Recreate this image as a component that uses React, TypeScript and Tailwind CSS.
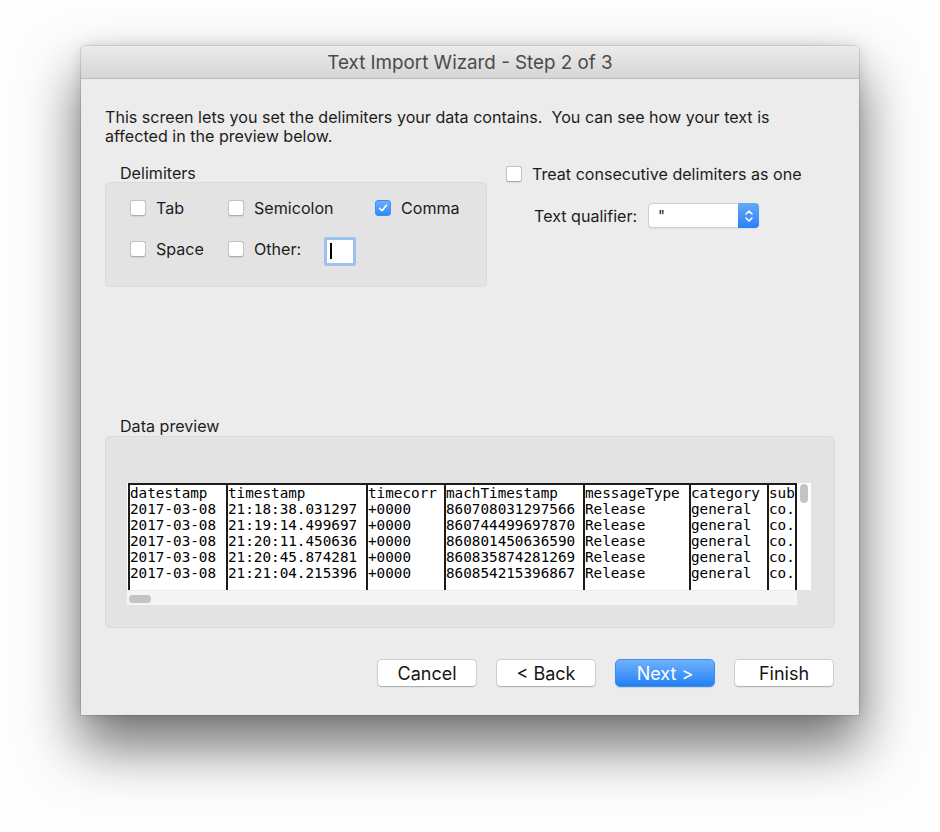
import React from "react";

function Checkbox({ checked }: { checked?: boolean }) {
  if (checked) {
    return (
      <div className="w-[16px] h-[16px] shrink-0 rounded-[3px] bg-gradient-to-b from-[#6aaefc] to-[#2f8bf8] border border-[#3a8ef2] flex items-center justify-center">
        <svg width="12" height="12" viewBox="0 0 12 12" fill="none">
          <path d="M2.6 6.3 L5 8.7 L9.4 3.2" stroke="white" strokeWidth="1.6" strokeLinecap="round" strokeLinejoin="round" />
        </svg>
      </div>
    );
  }
  return (
    <div className="w-[16px] h-[16px] shrink-0 rounded-[3px] bg-white border border-[#c3c3c3] border-b-[#adadad] shadow-[0_0.5px_1px_rgba(0,0,0,0.08)]" />
  );
}

function CheckItem({ label, checked, w }: { label: string; checked?: boolean; w: string }) {
  return (
    <div className={`flex items-center gap-[10px] ${w}`}>
      <Checkbox checked={checked} />
      <span className="leading-[20px]">{label}</span>
    </div>
  );
}

const cols: { w: string; rows: string[]; last?: boolean }[] = [
  { w: "w-[98px]", rows: ["datestamp", "2017-03-08", "2017-03-08", "2017-03-08", "2017-03-08", "2017-03-08"] },
  { w: "w-[140px]", rows: ["timestamp", "21:18:38.031297", "21:19:14.499697", "21:20:11.450636", "21:20:45.874281", "21:21:04.215396"] },
  { w: "w-[78px]", rows: ["timecorr", "+0000", "+0000", "+0000", "+0000", "+0000"] },
  { w: "w-[139px]", rows: ["machTimestamp", "860708031297566", "860744499697870", "860801450636590", "860835874281269", "860854215396867"] },
  { w: "w-[106px]", rows: ["messageType", "Release", "Release", "Release", "Release", "Release"] },
  { w: "w-[78px]", rows: ["category", "general", "general", "general", "general", "general"] },
  { w: "w-[30px]", rows: ["sub", "co.", "co.", "co.", "co.", "co."], last: true },
];

function Button({ label, primary }: { label: string; primary?: boolean }) {
  return (
    <div
      className={
        primary
          ? "w-[100px] h-[28px] rounded-[5px] flex items-center justify-center text-white bg-gradient-to-b from-[#6eb1fb] to-[#1f80f7] border border-[#3d8cf0] shadow-[0_1px_1px_rgba(0,0,0,0.12)]"
          : "w-[100px] h-[28px] rounded-[5px] flex items-center justify-center text-[#151515] bg-white border border-[#cdcdcd] border-b-[#b3b3b3] shadow-[0_1px_1px_rgba(0,0,0,0.06)]"
      }
    >
      {label}
    </div>
  );
}

export default function App() {
  return (
    <div className="w-[940px] h-[832px] bg-[#fdfdfe] pt-[46px] pl-[81px] font-['Inter','Noto_Sans',sans-serif] text-[16.1px] text-[#1c1c1c]">
      <div className="w-[778px] h-[669px] bg-[#ececec] rounded-t-[5px] flex flex-col shadow-[0_30px_55px_2px_rgba(0,0,0,0.55),0_0_14px_rgba(0,0,0,0.12),0_0_0_1px_rgba(0,0,0,0.1)]">
        {/* Title bar */}
        <div className="h-[33px] shrink-0 rounded-t-[5px] border-b border-[#bdbdbd] bg-gradient-to-b from-[#ececec] to-[#d5d5d5] flex items-center justify-center pt-[3px] text-[18.8px] text-[#4a4a4a]">
          Text Import Wizard - Step 2 of 3
        </div>

        <div className="flex-1 flex flex-col px-[24px]">
          <p className="mt-[29px] leading-[19px]">
            This screen lets you set the delimiters your data contains.&nbsp; You can see how your text is
            <br />
            affected in the preview below.
          </p>

          <div className="mt-[16px] flex">
            <div className="w-[382px] flex flex-col">
              <div className="pl-[15px] h-[20px] leading-[20px] translate-y-[1px]">Delimiters</div>
              <div className="h-[105px] rounded-[5px] bg-[#e3e3e3] border border-[#dadada] pt-[17px] pl-[24px]">
                <div className="flex h-[16px] items-center">
                  <CheckItem label="Tab" w="w-[98px]" />
                  <CheckItem label="Semicolon" w="w-[147px]" />
                  <CheckItem label="Comma" checked w="w-[100px]" />
                </div>
                <div className="flex h-[16px] items-center mt-[25px]">
                  <CheckItem label="Space" w="w-[98px]" />
                  <div className="flex items-center gap-[10px] w-[96px]">
                    <Checkbox />
                    <span className="leading-[20px]">Other:</span>
                  </div>
                  <div className="mt-[4px] w-[32px] h-[29px] shrink-0 rounded-[2px] border-[3px] border-[#9ec2ee] bg-white flex items-center pl-[3px]">
                    <div className="w-[1.5px] h-[16px] bg-black" />
                  </div>
                </div>
              </div>
            </div>

            <div className="ml-[19px] pt-[4px] flex flex-col">
              <div className="flex items-center h-[16px] gap-[10px]">
                <Checkbox />
                <span className="leading-[20px]">Treat consecutive delimiters as one</span>
              </div>
              <div className="mt-[21px] pl-[28px] flex items-center h-[25px]">
                <span className="w-[114px] leading-[20px]">Text qualifier:</span>
                <div className="w-[111px] h-[25px] rounded-[4px] bg-white border border-[#cfcfcf] shadow-[0_1px_1px_rgba(0,0,0,0.06)] flex">
                  <div className="flex-1 pl-[9px] leading-[23px] text-[15px]">&quot;</div>
                  <div className="w-[21px] -my-px -mr-px h-[25px] rounded-r-[4px] bg-gradient-to-b from-[#64aafa] to-[#2b7ff6] flex items-center justify-center">
                    <svg width="10" height="16" viewBox="0 0 10 16" fill="none">
                      <path d="M2 6 L5 3 L8 6" stroke="white" strokeWidth="1.5" strokeLinecap="round" strokeLinejoin="round" />
                      <path d="M2 10 L5 13 L8 10" stroke="white" strokeWidth="1.5" strokeLinecap="round" strokeLinejoin="round" />
                    </svg>
                  </div>
                </div>
              </div>
            </div>
          </div>

          <div className="mt-[128px] pl-[15px] h-[20px] leading-[20px] translate-y-[1px]">Data preview</div>
          <div className="mt-[1px] h-[192px] rounded-[5px] bg-[#e3e3e3] border border-[#dadada] pt-[46px] pl-[21px]">
            <div className="flex h-[107px]">
              <div className="w-[670px] h-full bg-white pl-[1px] overflow-hidden">
                <div className="flex h-full border-t-2 border-[#1c1c1c] font-['DejaVu_Sans_Mono',monospace] text-[14.3px] leading-[16px] text-black">
                  {cols.map((c, i) => (
                    <div
                      key={i}
                      className={`${c.w} shrink-0 h-full border-l-2 border-[#1c1c1c] ${c.last ? "border-r-2" : ""} overflow-hidden whitespace-pre`}
                    >
                      {c.rows.map((r, j) => (
                        <div key={j}>{r}</div>
                      ))}
                    </div>
                  ))}
                </div>
              </div>
              <div className="w-[14px] h-full bg-white pl-[3px] pt-[1px]">
                <div className="w-[8px] h-[19px] rounded-full bg-[#c3c3c3]" />
              </div>
            </div>
            <div className="w-[670px] h-[15px] bg-[#f5f5f5] border-t border-[#ebebeb] pl-[2px] pt-[4px]">
              <div className="w-[22px] h-[8px] rounded-full bg-[#c3c3c3]" />
            </div>
          </div>

          <div className="mt-[31px] flex justify-end gap-[19px] pr-[1px] text-[18px]">
            <Button label="Cancel" />
            <Button label="< Back" />
            <Button label="Next >" primary />
            <Button label="Finish" />
          </div>
        </div>
      </div>
    </div>
  );
}
